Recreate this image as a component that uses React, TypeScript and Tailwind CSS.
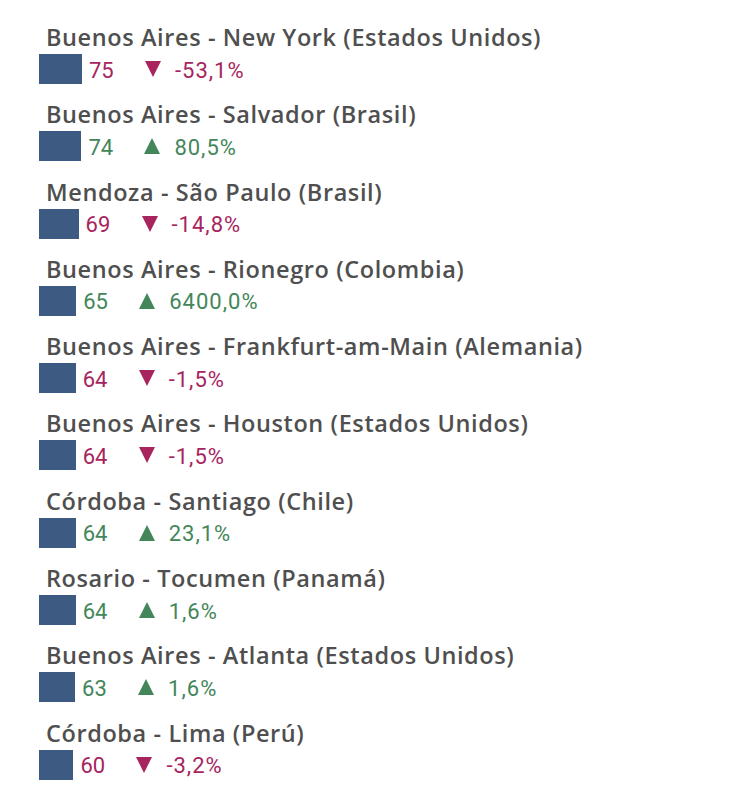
const routes = [
  { name: "Buenos Aires - New York (Estados Unidos)", value: 75, change: "-53,1%", up: false },
  { name: "Buenos Aires - Salvador (Brasil)", value: 74, change: "80,5%", up: true },
  { name: "Mendoza - São Paulo (Brasil)", value: 69, change: "-14,8%", up: false },
  { name: "Buenos Aires - Rionegro (Colombia)", value: 65, change: "6400,0%", up: true },
  { name: "Buenos Aires - Frankfurt-am-Main (Alemania)", value: 64, change: "-1,5%", up: false },
  { name: "Buenos Aires - Houston (Estados Unidos)", value: 64, change: "-1,5%", up: false },
  { name: "Córdoba - Santiago (Chile)", value: 64, change: "23,1%", up: true },
  { name: "Rosario - Tocumen (Panamá)", value: 64, change: "1,6%", up: true },
  { name: "Buenos Aires - Atlanta (Estados Unidos)", value: 63, change: "1,6%", up: true },
  { name: "Córdoba - Lima (Perú)", value: 60, change: "-3,2%", up: false },
];

function Arrow({ up }: { up: boolean }) {
  return (
    <svg width="16" height="16" viewBox="0 0 16 16" className="shrink-0">
      {up ? (
        <polygon points="8,0 16,16 0,16" fill="#43865a" />
      ) : (
        <polygon points="0,0 16,0 8,16" fill="#a7245e" />
      )}
    </svg>
  );
}

export default function App() {
  return (
    <div className="w-[731px] h-[800px] bg-white pl-[39px] pt-[23px]">
      <div className="flex flex-col gap-[16.3px]">
        {routes.map((r, i) => (
          <div key={i} className="flex flex-col">
            <div
              className="pl-[7px] text-[23.5px] leading-[28px] font-semibold text-[#4f4f4f] whitespace-nowrap tracking-[0.6px]"
              style={{ fontFamily: '"Open Sans", sans-serif' }}
            >
              {r.name}
            </div>
            <div
              className={`mt-[3px] flex items-center h-[30px] text-[22px] ${r.up ? "text-[#43865a]" : "text-[#a7245e]"}`}
              style={{ fontFamily: "Roboto, sans-serif" }}
            >
              <div className="h-[30px] bg-[#3c5a82] shrink-0" style={{ width: `${r.value * 0.573}px` }} />
              <span className="ml-[7px] w-[56px] shrink-0 pt-[2px]">{r.value}</span>
              <Arrow up={r.up} />
              <span className="ml-[14px] tracking-[1px] pt-[2px]">{r.change}</span>
            </div>
          </div>
        ))}
      </div>
    </div>
  );
}
